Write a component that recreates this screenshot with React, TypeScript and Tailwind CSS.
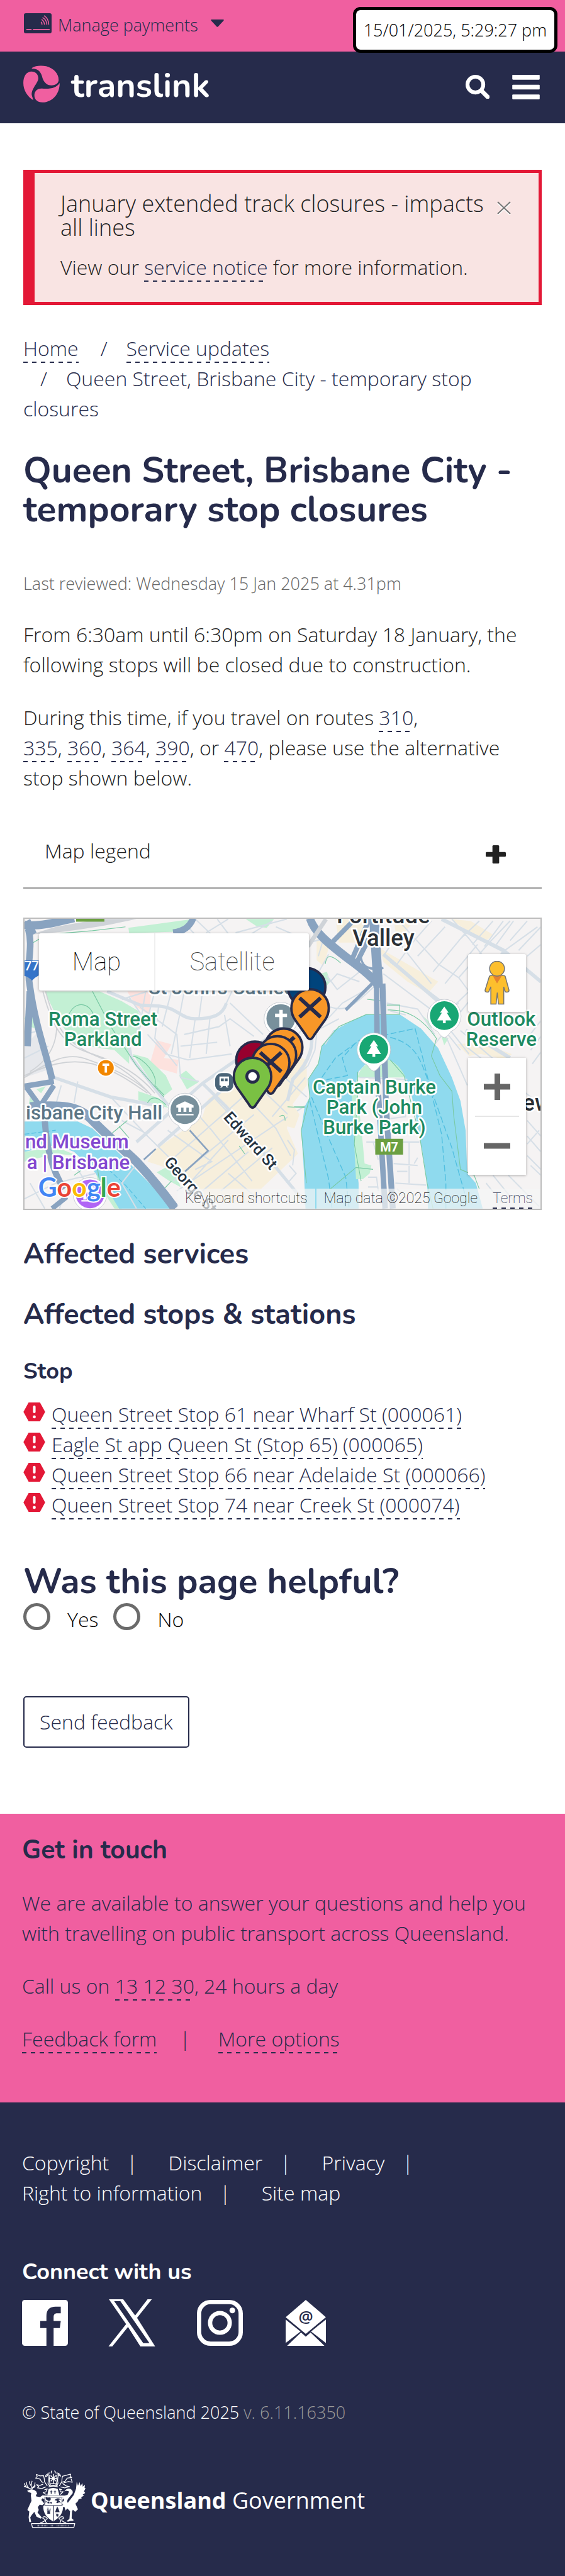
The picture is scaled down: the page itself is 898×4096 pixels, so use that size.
import type { ReactNode } from "react";

const HEADING = "font-['Nunito','Open_Sans',sans-serif] font-bold";

function Link({ children, href = "#" }: { children: ReactNode; href?: string }) {
  return (
    <a
      href={href}
      className="bg-[linear-gradient(90deg,#262b4b_50%,transparent_50%)] bg-[length:14px_2px] bg-[position:0_100%] bg-repeat-x pb-0.5 text-[#262b4b]"
    >
      {children}
    </a>
  );
}

function CardIcon() {
  return (
    <svg viewBox="0 0 58 42" className="h-8 w-11" aria-hidden="true">
      <rect width="58" height="42" rx="4" fill="#262b4b" />
      <path d="M6 34h9M20 34h33" stroke="#f05fa0" strokeWidth="2.6" strokeLinecap="round" />
      <g fill="none" stroke="#f05fa0" strokeWidth="2">
        <path d="M36 18q2 3 2 6" />
        <path d="M37 13q6 4 6 11" />
        <path d="M39 9q9 5 9 15" />
        <path d="M42 5q10 6 10 19" />
      </g>
    </svg>
  );
}

function TranslinkMark() {
  return (
    <svg viewBox="48 137 77 78" className="h-15 w-[58px]" aria-hidden="true">
      <g transform="scale(.752 .3333)" fill="#f05fa0">
        <path d="M88 424C98 410 114 407 128 414C150 427 163 462 163 500C163 520 155 535 143 535C130 535 122 515 118 490C114 452 106 428 88 430Z" />
        <path d="M92 629C75 605 64 565 64 520C64 478 72 447 87 447C98 447 106 465 106 490C106 520 84 560 88 600Z" />
        <path d="M166 520C166 590 146 641 118 643C103 642 95 625 95 598C95 573 103 554 116 555C140 560 157 550 166 520Z" />
      </g>
    </svg>
  );
}

function Pin({ x, y, fill, cross }: { x: number; y: number; fill: string; cross?: boolean }) {
  return (
    <g transform={`translate(${x} ${y})`} stroke="#262b4b">
      <path
        d="M0 66C-4 66 -6 62 -9 57L-31 26C-37 18 -39 10 -39 1A39 39 0 0 1 39 1C39 10 37 18 31 26L9 57C6 62 4 66 0 66Z"
        fill={fill}
        strokeWidth="5"
      />
      {cross && <path d="M-22 -20L22 20M22 -20L-22 20" strokeWidth="8" />}
    </g>
  );
}

function PlacePin({ x, y, fill, children }: { x: number; y: number; fill: string; children: ReactNode }) {
  return (
    <g transform={`translate(${x} ${y})`}>
      <path d="M0 46Q-7 44 -14 33A35 35 0 1 1 14 33Q7 44 0 46Z" fill="#fff" stroke="#b9bfc6" strokeWidth="1" />
      <circle r="30" fill={fill} />
      <g fill="#fff">{children}</g>
    </g>
  );
}

const LEFT_ROADS =
  "M480 420L660 490L760 495C860 500 880 560 960 560C1060 560 1110 540 1130 480L1160 420M600 450L660 530L640 640L600 700L612 760L810 1000L900 1080M560 460L700 420M660 500L860 640L880 860L980 880M690 420L640 700M740 420L700 560M830 420L780 600M900 420L880 520M1000 420L980 560M760 500L740 660L860 800M880 520L830 740M900 640L1090 600L1150 560L1280 650M880 700L1080 680M960 560L930 760M1040 560L1020 740M1120 540L1150 700M1150 480L1330 640M700 640L800 740L920 770L1160 740M190 860L500 960L790 1010M230 900L200 1000M320 880L300 990M640 1190L1000 890L1568 520M560 1080L680 1140M500 960L700 1160L830 1280M760 1210L1100 930M820 1290L1220 960M660 1280L560 1400L640 1530M840 1390L1280 1050M860 1440L1400 1100L1568 1000M1000 890L1130 1010L1470 1400L1568 1510M900 970L1050 1130L1270 1390M1060 960L1200 1100M1240 960L1400 1120L1480 1260M810 1130L1050 1290L960 1330M920 1410L1140 1180M1000 1440L1250 1240M1100 1440L1380 1220M1300 900L1500 1080M1400 820L1568 960M1140 1350L1300 1480M1380 1060L1560 860M60 1400L140 1530M30 1480L200 1400L420 1350M300 1300L400 1450M250 1450L220 1530M430 1520L350 1400M920 90L1130 300M960 50L1240 300M1020 120L1140 50M1080 50L1240 250M1120 210L1380 60M1180 120L1460 50M1400 90L1500 130M30 760L160 700M30 640L110 620M220 560L430 540";

const RIGHT_ROADS =
  "M640 50L880 280L1000 350L1060 420M900 50L1260 210L1480 370M960 50L1060 150L1180 280M700 200L840 60M760 240L920 90M850 320L1040 120M920 380L1110 180M600 270L900 470M560 330L880 540M620 160L560 240M660 180L840 380M740 160L640 280M1000 350L1190 160L1300 60M1120 60L1000 160M1200 60L1080 180M1260 60L1150 190M1320 60L1220 180M1400 60L1300 160M1460 90L1270 210L1060 470L860 690M1350 210L1480 90M1400 240L1480 180M1060 420L860 590M880 540L1060 740M900 600L1010 720M860 560L1000 480M920 640L1000 800L1050 900M1010 620L1380 900M1040 700L1480 1000M1400 660L1480 570M1420 720L1480 650M1430 790L1480 730M1400 1080L1480 1160M1400 1160L1480 1240M1400 1200L1470 1130M1400 1260L1480 1330M1160 1400L1250 1500M1200 1360L1330 1500M1290 1360L1470 1520M1420 1310L1480 1360M240 230L170 340L250 370L290 330L420 370M230 340L290 410L420 320M30 520L170 640L160 720L120 800L30 870L0 980M150 640L320 480L480 400M250 500C350 530 400 480 500 400M170 620L300 560M220 690L270 620M580 480L760 510L860 640M600 520L690 540M180 240L210 150L130 170M0 700L120 580M420 860L700 870M600 1070L690 1060L690 1030M460 1190L770 1190M500 1190L530 1280M710 1190L710 1400M470 1370L520 1370L530 1440M470 1420L530 1420M620 1300L760 1310M630 1400L810 1410M640 1430L720 1500M470 1500L560 1500M640 1340L700 1340M740 1300L760 1270M0 1180L40 1230L30 1310M0 1400L50 1350L10 1310";

function CityMap() {
  return (
    <svg
      viewBox="3 3 1077 605"
      preserveAspectRatio="xMidYMid slice"
      className="absolute inset-0 h-full w-full"
      aria-label="Map of stops near Queen Street, Brisbane City"
    >
      <rect width="1083" height="611" fill="#f5f3f3" />
      {/* western half */}
      <g transform="translate(-8 -17) scale(.3827 .4082)">
        <g fill="#f7efdc">
          <path d="M1030 970L1240 820L1480 740L1568 770V900L1480 1010L1460 1120L1520 1250L1420 1340L1240 1500H1060L830 1330L700 1290L740 1230L880 1140L1000 1060Z" />
        </g>
        <path d="M590 420H720L710 540L640 500ZM750 670L830 690L790 760L870 770L860 840L710 800Z" fill="#fde2de" />
        <g fill="#c3f0d4">
          <path d="M140 420H440L560 470L650 520L665 600L600 700L600 790L520 720L440 710L300 690L200 540Z" />
          <path d="M620 740L700 760L800 850L835 920L790 955L720 880Z" />
          <path d="M873 850L910 825L977 885L915 920Z" />
          <path d="M650 930L760 965L815 1015L700 990L650 975Z" />
          <path d="M596 95L950 50L850 115L600 122Z" />
          <path d="M1235 50H1390L1350 95L1300 90Z" />
          <path d="M750 1345L840 1300L880 1420L820 1390Z" />
          <path d="M30 560L75 450L120 620L60 600ZM60 960L85 990L50 1010ZM95 920L145 905L120 940Z" />
          <path d="M410 1290L500 1400L560 1530H520L430 1400ZM30 1240L200 1215L320 1260L200 1250L30 1290Z" />
        </g>
        <path d="M30 700L90 640L130 650L160 820L30 860Z" fill="#e6e8ec" />
        <path d="M60 130C200 120 380 105 640 50H440L200 90Z" fill="#cfd3d8" />
        <path
          d="M30 1085H320L400 1120L560 1260L850 1530H545L480 1430L400 1330L300 1240L200 1205L30 1240Z"
          fill="#8fdaee"
        />
        <path
          d="M30 1150L200 1130M430 1280L580 1410L690 1530"
          fill="none"
          stroke="#52bfe0"
          strokeWidth="4"
          strokeDasharray="26 12"
        />
        <path d={LEFT_ROADS} fill="none" stroke="#d6dfe7" strokeWidth="7" />
        <path
          d="M480 420L660 490L760 495C860 500 880 560 960 560C1060 560 1110 540 1130 480M190 860L500 960L790 1010M640 1190L1000 890L1568 520M1000 890L1130 1010L1470 1400L1568 1510M600 700L612 760L810 1000M760 1210L1100 930"
          fill="none"
          stroke="#d6dfe7"
          strokeWidth="17"
        />
        <g fill="none" stroke="#cfd2d6" strokeWidth="6">
          <path d="M130 420C190 640 260 700 400 740C560 790 660 850 740 940" />
          <path d="M145 420C200 620 270 690 420 750C560 800 650 880 720 950" />
          <path d="M30 860C150 790 250 720 380 770C500 810 600 850 700 930" />
          <path d="M30 850C150 800 260 760 400 790C540 830 620 890 700 940" />
          <path d="M200 540C220 660 180 760 60 830" />
        </g>
        <g fill="none" stroke="#79c9a4" strokeWidth="4">
          <path d="M400 420L500 600L640 800L790 960" />
          <path d="M620 750C680 760 760 850 740 900L790 950M700 990C720 950 760 960 800 1000M60 180L150 130L400 110L580 90M270 540C320 440 420 500 410 580" />
          <path d="M500 1150L590 1080M545 1110L600 1170M300 1360L420 1280L440 1400M830 1390L790 1430M1200 1210L1230 1250M1420 1060Q1450 1040 1450 1080M1470 1010H1560" />
        </g>
        <g fill="none" stroke="#89a3c0">
          <path d="M30 80C100 90 190 70 300 45" strokeWidth="42" />
          <path d="M40 60L75 130" strokeWidth="46" />
          <path d="M50 100C80 200 35 280 60 400C90 600 150 740 180 870" strokeWidth="36" />
          <path d="M60 420L45 700" strokeWidth="38" />
          <path d="M30 905L190 880M40 910L110 1000M120 1000L190 900" strokeWidth="28" />
          <path d="M60 1010C230 1000 320 1005 390 1070C460 1140 560 1220 640 1290C720 1370 780 1440 850 1530" strokeWidth="48" />
          <path d="M140 1080C150 1200 170 1320 245 1430" strokeWidth="34" />
          <path d="M950 45C930 90 900 110 840 120" strokeWidth="34" />
          <path d="M680 1280L745 1225M930 1130L1030 1235L905 1340" strokeWidth="9" />
          <path d="M180 1530L260 1470" strokeWidth="26" />
        </g>
      </g>
      {/* eastern half */}
      <g transform="translate(552 -17) scale(.3571 .4082)">
        <path
          d="M280 50H480L400 170L300 170ZM540 200L760 310L880 370L820 430L700 370L560 270ZM620 60L740 60L640 160ZM950 50L1070 60L1200 130L1150 170ZM170 150L240 200L210 290L170 260ZM0 960L70 1050L40 1120L0 1110ZM990 690L1120 680L1310 740L1280 770L1130 740L1060 750Z"
          fill="#f7efdc"
        />
        <path d="M190 330L230 320L250 370L200 420ZM790 545L860 600L830 610ZM900 650L940 660L915 695Z" fill="#c3f0d4" />
        <path
          d="M105 1530L95 1330L80 1130L100 1010L130 960L122 870L180 790L200 700L270 620L380 570L460 538L660 540L780 610L880 710L960 860L1010 980L1040 1130L1050 1350L1100 1400L1140 1530H820L815 1400L790 1250L770 1150L720 930L680 850L600 775L480 770L415 830L380 960L390 1200L415 1400V1530Z"
          fill="#8fdaee"
        />
        <path d="M410 860C420 800 500 765 560 765C620 765 670 820 690 860Z" fill="#c3f0d4" />
        <path d="M375 940L410 860V950L440 1200L450 1300L490 1310L480 1350L440 1380H400Z" fill="#c3f0d4" />
        <g fill="none" stroke="#52bfe0" strokeWidth="5" strokeDasharray="34 14">
          <path d="M130 980L240 1380L260 1530M140 960L240 1170L340 1370L360 1530M200 860L280 760L420 670L745 610L790 760L900 1150L925 1400V1530" />
          <path d="M600 655C760 690 780 780 830 900L960 1220L1050 1500M180 880L350 850L320 760L400 680" />
        </g>
        <path d={RIGHT_ROADS} fill="none" stroke="#d6dfe7" strokeWidth="7" />
        <path
          d="M900 50L1260 210L1480 370M560 230L880 470L860 590M1270 210L1060 470M30 520L150 640M120 600C170 680 130 780 30 870L0 980M1040 620L1300 760"
          fill="none"
          stroke="#d6dfe7"
          strokeWidth="20"
        />
        <g fill="none" stroke="#79c9a4" strokeWidth="4">
          <path d="M110 1400L80 1130L130 960L120 870L180 790L200 700L300 600L460 538H655V490H580M585 515C700 510 790 560 870 660L840 750L890 850L960 930L970 1050L1010 1330L1090 1360L1120 1430M600 770L680 850L770 1150L815 1400L850 1530" />
          <path d="M410 830V940L390 1200L430 1390M250 1430L400 1320L500 1330M220 280Q230 230 260 245Q280 250 310 275M0 1010L100 1015M465 460L560 470" />
        </g>
        <g fill="none" stroke="#89a3c0">
          <path d="M130 45C160 130 280 200 350 250C430 300 500 350 540 400" strokeWidth="46" />
          <path d="M400 45L260 170" strokeWidth="26" />
          <path d="M480 45L380 250M510 90L400 280" strokeWidth="28" />
          <path d="M505 45L530 400" strokeWidth="56" />
          <path d="M495 380L340 515" strokeWidth="18" />
          <path d="M430 250Q440 320 560 300" strokeWidth="12" />
          <path d="M520 380L525 850L570 1530" strokeWidth="32" />
          <path d="M555 380L575 1000L615 1530" strokeWidth="34" />
        </g>
        <path d="M225 50L120 190" stroke="#cfd3d8" strokeWidth="24" />
      </g>

      <path d="M111 3h59v6h-59z" fill="#6b9f41" />
      <path d="M3 90H33V121Q25 125 19 132Q12 124 3 122Z" fill="#3574c9" />
      <g
        fontFamily="Roboto, sans-serif"
        fontSize="41"
        fontWeight="500"
        stroke="#fff"
        strokeWidth="7"
        strokeLinejoin="round"
        style={{ paintOrder: "stroke" }}
      >
        <text x="3" y="110" fontSize="27" fill="#fff" stroke="none">77</text>
        <g fill="#5b7686">
          <text x="262" y="160">St John's Cathedral</text>
          <text x="291" y="422" textAnchor="end">isbane City Hall</text>
        </g>
        <g fill="#1e8a61" textAnchor="middle">
          <text x="167" y="226">Roma Street</text>
          <text x="167" y="268">Parkland</text>
          <text x="733" y="368">Captain Burke</text>
          <text x="733" y="410">Park (John</text>
          <text x="733" y="452">Burke Park)</text>
          <text x="998" y="226">Outlook</text>
          <text x="998" y="268">Reserve</text>
        </g>
        <g fill="#8348d0" textAnchor="end">
          <text x="221" y="482">nd Museum</text>
          <text x="223" y="525">a | Brisbane</text>
        </g>
        <g fill="#263442" fontSize="33" fontWeight="500">
          <text transform="translate(417 418) rotate(48)">Edward St</text>
          <text transform="translate(293 512) rotate(48)">George St</text>
        </g>
        <g fill="#2b3036" fontSize="48">
          <text x="752" y="12" textAnchor="middle">Fortitude</text>
          <text x="752" y="60" textAnchor="middle">Valley</text>
          <text x="1042" y="403">ew</text>
        </g>
      </g>
      <rect x="735" y="462" width="58" height="33" fill="#6b9f41" />
      <text x="764" y="488" fontFamily="Roboto, sans-serif" fontSize="26" fontWeight="700" fill="#fff" textAnchor="middle">
        M7
      </text>

      <PlacePin x={538} y={211} fill="#78909c">
        <path d="M-3 -18H4V-10H13V-3H4V18H-3V-3H-12V-10H-3Z" />
      </PlacePin>
      <PlacePin x={338} y={401} fill="#78909c">
        <path d="M-18 -9L0 -17L18 -9V-4H14V5H8V-4H3V5H-3V-4H-8V5H-14V-4H-18ZM-18 9H18V12H-18Z" />
      </PlacePin>
      <PlacePin x={732} y={275} fill="#18a774">
        <path d="M0 -19L9 -6H5L15 10H3V16H-3V10H-15L-5 -6H-9Z" />
      </PlacePin>
      <PlacePin x={879} y={205} fill="#18a774">
        <path d="M0 -19L9 -6H5L15 10H3V16H-3V10H-15L-5 -6H-9Z" />
      </PlacePin>
      <PlacePin x={140} y={577} fill="#b065f5">
        <path d="M-18 -8L0 -18L18 -8V-3H-18ZM-14 0H-8V12H-14ZM-3 0H3V12H-3ZM8 0H14V12H8ZM-18 13H18V16H-18Z" />
      </PlacePin>
      <g transform="translate(173 314)">
        <circle r="19" fill="#fff" />
        <circle r="16.5" fill="#f28700" />
        <path d="M-7 -9H7V-4H2.5V10H-2.5V-4H-7Z" fill="#fff" />
      </g>
      <g transform="translate(420 344)">
        <rect x="-22" y="-22" width="44" height="44" rx="17" fill="#fff" />
        <rect x="-19" y="-19" width="38" height="38" rx="14" fill="#4a6478" />
        <path d="M-10 -12H10V6L6 8L9 11H5L3 8H-3L-5 11H-9L-6 8L-10 6ZM-7 -8V-2H-1V-8ZM1 -8V-2H7V-8Z" fill="#fff" fillRule="evenodd" />
      </g>

      <Pin x={592} y={144} fill="#00447c" />
      <Pin x={599} y={188} fill="#f89728" cross />
      <Pin x={484} y={297} fill="#97002e" />
      <Pin x={544} y={270} fill="#f89728" cross />
      <Pin x={531} y={286} fill="#f89728" />
      <Pin x={517} y={302} fill="#f89728" cross />
      <Pin x={479} y={331} fill="#7ac143" />
      <circle cx="479" cy="332" r="12" fill="#fff" stroke="#262b4b" strokeWidth="6" />

      <g fontFamily="Lato, sans-serif" fontSize="54" fontWeight="700" stroke="#fff" strokeWidth="5" style={{ paintOrder: "stroke" }}>
        <text x="32" y="583" fill="#4285f4">
          G<tspan fill="#ea4335">o</tspan>
          <tspan fill="#fbbc05">o</tspan>
          <tspan fill="#4285f4">g</tspan>
          <tspan fill="#34a853">l</tspan>
          <tspan fill="#ea4335">e</tspan>
        </text>
      </g>
    </svg>
  );
}

function MapPanel() {
  return (
    <section className="relative mt-[46px] h-[465px] overflow-hidden border-2 border-[#bdbdbd] font-['Roboto',sans-serif]">
      <CityMap />
      <div className="absolute left-[23px] top-[23px] flex h-[91px] rounded-[3px] bg-white text-[40px] font-thin shadow-[0_1px_4px_rgba(0,0,0,0.3)]">
        <button className="w-[185px] border-r-2 border-[#efefef] text-black">Map</button>
        <button className="w-61 text-[#444]">Satellite</button>
      </div>
      <button
        aria-label="Street View"
        className="absolute right-[23px] top-14 flex h-[92px] w-[92px] items-center justify-center rounded-[3px] bg-white shadow-[0_1px_4px_rgba(0,0,0,0.3)]"
      >
        <svg viewBox="0 0 52 92" className="h-[70px] w-10" fill="#fdbf2d" stroke="#757575" strokeWidth="2">
          <path d="M10 32Q12 30 16 30H37Q41 30 43 32L51 61Q51 65 47 65Q43 66 42 61L40 54V90H29L26.500 66L24 90H13V54L10 61Q9 66 5 65Q1 65 1 61Z" />
          <path d="M17 31H36L26 47Z" fill="#e5822f" stroke="none" />
          <circle cx="26" cy="16" r="15.500" />
        </svg>
      </button>
      <div className="absolute right-[23px] top-[221px] flex h-[186px] w-[92px] flex-col bg-white px-[11px] shadow-[0_1px_4px_rgba(0,0,0,0.3)]">
        <button aria-label="Zoom in" className="flex flex-1 items-center justify-center border-b-2 border-[#e6e6e6]">
          <svg viewBox="0 0 42 42" className="size-[42px]" fill="#666">
            <path d="M17 0h9v16.500h16v9H26V42h-9V25.500H0v-9h17z" />
          </svg>
        </button>
        <button aria-label="Zoom out" className="flex flex-1 items-center justify-center">
          <svg viewBox="0 0 42 42" className="size-[42px]" fill="#666">
            <path d="M0 16.500h42v9H0z" />
          </svg>
        </button>
      </div>
      <div className="absolute bottom-0 right-0 flex h-8 gap-0.5 text-[23px] font-thin leading-8 text-black">
        <button className="bg-[#f5f5f5]/70 px-3">Keyboard shortcuts</button>
        <div className="flex gap-6 bg-[#f5f5f5]/70 px-3">
          <span>Map data ©2025 Google</span>
          <Link>Terms</Link>
        </div>
      </div>
    </section>
  );
}

function StopIcon() {
  return (
    <svg viewBox="0 0 46 40" className="h-[30px] w-[35px]" aria-hidden="true">
      <path d="M11 0H35L46 20L35 40H11L0 20Z" fill="#e31836" />
      <path d="M23 9V20" stroke="#fff" strokeWidth="5.500" strokeLinecap="round" />
      <circle cx="23" cy="30.500" r="3.200" fill="#fff" />
    </svg>
  );
}

const STOPS = [
  "Queen Street Stop 61 near Wharf St (000061)",
  "Eagle St app Queen St (Stop 65) (000065)",
  "Queen Street Stop 66 near Adelaide St (000066)",
  "Queen Street Stop 74 near Creek St (000074)",
];

function CoatOfArms() {
  return (
    <svg viewBox="54 76 394 368" className="h-[93px] w-[99px]" aria-hidden="true">
      <g fill="#fff">
        {/* deer */}
        <path d="M78 208L98 200L122 202L136 212L142 228L134 234L136 244L160 248L180 234L184 246L168 266L186 288L174 300L158 296L146 312L152 330L144 346L172 378L164 384L138 372L124 342L108 360L98 376L104 406L92 406L88 376L92 340L80 330L92 302L106 272L102 240L104 222L86 216Z" />
        {/* brolga */}
        <path d="M314 212Q330 190 352 196Q372 208 366 224L338 258Q326 278 336 284L374 234L388 194L392 152L400 176L410 154L416 178L428 160L430 182L444 170L442 190L448 192L438 212L446 222L430 232L438 240L420 248L424 256L404 262L400 274L384 290L400 326L382 342L368 328L362 340L360 382L374 394L366 398H352L336 404L330 398L346 386L350 338L332 320L322 334L314 310L300 312L306 296L298 284L312 270L308 240L334 234L344 212L326 208Z" />
        {/* shield */}
        <path d="M178 238H310V260L302 264V298L306 306C306 350 284 380 243 402C202 380 180 350 180 306L188 298V262L178 258Z" />
        <path d="M214 196Q243 184 272 196L282 236H206Z" />
      </g>
      <g fill="#262b4b">
        <path d="M186 246H302V254H186ZM194 254H186V300H194ZM300 254H294V300H300Z" opacity=".35" />
        <path d="M196 252Q200 244 208 252L224 250Q232 260 224 270Q214 276 206 268Q194 264 196 252ZM206 278L218 276L220 288L208 288ZM224 280L234 278V290L226 288ZM194 270L202 276L196 286Z" />
        <path d="M252 268Q260 254 274 256Q292 256 290 268Q284 262 276 266Q288 274 292 288L280 280Q272 292 262 284Q272 276 264 270Z" />
        <path d="M188 300H300V304H246V398H241V304H188Z" />
        <path d="M269 308L276 322L284 344H256L262 324Z" />
        <path d="M200 316L208 344L205 310L212 340L214 310L217 340L224 310L220 344L230 316L222 352H208ZM206 348H224V354H206Z" />
        <path d="M258 352L266 358L268 350L272 358L280 354L274 362L282 372L274 368L268 374L266 366L258 368L264 362Z" />
        <path d="M228 206h5v6h5v4h-5v12h-5v-12h-5v-4h5zM252 206h5v6h5v4h-5v12h-5v-12h-5v-4h5z" />
      </g>
      <g fill="none" stroke="#fff" strokeWidth="5" strokeLinejoin="round">
        <path d="M60 160Q66 186 90 192L110 200M74 154Q74 176 88 190M58 180L80 188M92 148Q94 168 104 178L112 200M110 146Q104 160 108 174M128 156Q130 180 110 188L112 200M130 176Q128 186 116 190" />
        <path d="M236 82Q228 84 232 98M208 102Q192 110 196 120L210 110Q216 140 210 160L222 180M250 82Q260 84 256 98M272 96Q288 102 290 116L276 108Q268 140 274 160L262 180" />
        <path d="M224 96Q212 92 208 104L222 112Q214 140 226 172M262 96Q274 92 278 104L264 112Q272 140 260 172" />
        <path d="M136 104L160 114L182 112Q188 130 188 150L206 178M136 104L142 118L132 128L160 134L170 152L182 156M354 102L326 110L302 116Q298 130 298 150L282 178M354 102L350 116L360 124L332 128L318 148L300 154M356 132L364 154L340 150L310 158" />
        <path d="M180 166L160 174L138 170L152 182L144 190L172 194L196 184M302 162L326 178L346 182L316 190L290 184M188 202L206 196L196 216L180 220L200 232M298 202L282 196L292 216L306 214L288 232" />
        <path d="M216 174H272M218 166Q244 158 270 166M214 184Q244 174 274 184" />
        <path d="M202 412Q184 398 206 384Q196 368 180 374Q172 384 186 386Q202 400 160 412M284 412Q300 398 280 384Q292 368 306 374Q314 384 300 386Q288 400 326 412" />
        <path d="M106 416H380L374 440H112Z" />
        <path d="M228 112L260 148M260 112L228 148M244 102V164M222 130H268" strokeWidth="6" />
      </g>
      <path
        d="M146 434V424M152 424V434M160 424V434M170 424V434M176 424V434M186 424V434M194 424V434M204 424V434M230 424V434M240 424V434M268 424V434M276 424V434M286 424V434M294 424V434M304 424V434M312 424V434M320 424V434M330 424V434M340 424V434"
        stroke="#fff"
        strokeWidth="3"
        opacity=".8"
      />
    </svg>
  );
}

function SocialIcons() {
  return (
    <div className="mt-5 flex h-[73px] items-center">
      <a href="#" aria-label="Facebook" className="mr-16">
        <svg viewBox="0 0 96 96" className="size-[73px]">
          <rect width="96" height="96" rx="6" fill="#fff" />
          <path d="M51 96V59H38V44H51V34C51 20 58 14 70 14H81V28H74C69 28 66 30 66 36V44H81L79 59H66V96Z" fill="#262b4b" />
        </svg>
      </a>
      <a href="#" aria-label="X" className="mr-[66px]">
        <svg viewBox="0 0 98 99" className="size-[75px]" fill="#fff">
          <path
            fillRule="evenodd"
            d="M1 0H31L56 34L82 0H91L60 39L98 99H67L41 58L8 99H0L37 52ZM12 4L73 92H86L25 4Z"
          />
        </svg>
      </a>
      <a href="#" aria-label="Instagram" className="mr-[68px]">
        <svg viewBox="0 0 96 96" className="size-[73px]" fill="none" stroke="#fff">
          <rect x="4.500" y="4.500" width="87" height="87" rx="24" strokeWidth="9" />
          <circle cx="48" cy="48" r="20.500" strokeWidth="9" />
          <circle cx="74" cy="22" r="6" fill="#fff" stroke="none" />
        </svg>
      </a>
      <a href="#" aria-label="Email newsletter">
        <svg viewBox="0 0 84 96" className="h-[73px] w-16" fill="#fff">
          <path d="M42 0L84 36L42 71L0 36Z" />
          <path d="M0 41V90L31 66ZM84 41V90L53 66ZM3 96L32 68L42 77L52 68L81 96Z" />
          <text x="42" y="47" fontFamily="Open Sans, sans-serif" fontWeight="600" fontSize="34" fill="#262b4b" textAnchor="middle">
            @
          </text>
        </svg>
      </a>
    </div>
  );
}

export default function App() {
  return (
    <div className="flex min-h-screen flex-col bg-white font-['Open_Sans',sans-serif] text-[32px] font-light leading-[48px] text-[#212121]">
      <div className="relative flex h-[82px] items-center bg-[#f05fa0] px-[38px] pb-2 text-[27px] text-[#262b4b]">
        <button className="flex items-center gap-[10px]">
          <CardIcon />
          <span className="pt-1.5">Manage payments</span>
          <svg viewBox="0 0 28 16" className="ml-[10px] h-3 w-[21px]" fill="#262b4b" aria-hidden="true">
            <path d="M2 0H26Q29 0 27 2.500L15.500 15Q14 16.500 12.500 15L1 2.500Q-1 0 2 0Z" />
          </svg>
        </button>
        <div className="absolute right-3 top-[11px] z-10 flex h-[73px] items-center rounded-xl border-[5px] border-black bg-white px-3 text-black">
          15/01/2025, 5:29:27 pm
        </div>
      </div>

      <header className="flex h-[114px] items-center justify-between bg-[#262b4b] pb-[10px] pl-[37px] pr-10">
        <a href="#" className="flex items-center gap-[18px] text-white">
          <TranslinkMark />
          <span className={`${HEADING} pt-1 text-[54px] leading-[60px]`}>translink</span>
        </a>
        <div className="flex items-center gap-9 pt-2">
          <button aria-label="Search">
            <svg viewBox="0 0 50 50" className="h-[38px] w-[38px]" fill="none" stroke="#fff">
              <circle cx="20.500" cy="20.500" r="16.500" strokeWidth="8" />
              <path d="M33 33L46 46" strokeWidth="9" strokeLinecap="round" />
            </svg>
          </button>
          <button aria-label="Menu">
            <svg viewBox="0 0 57 51" className="h-[39px] w-[44px]" fill="#fff">
              <rect width="57" height="10" rx="1.500" />
              <rect y="20.500" width="57" height="10" rx="1.500" />
              <rect y="41" width="57" height="10" rx="1.500" />
            </svg>
          </button>
        </div>
      </header>

      <main className="px-[37px]">
        <div role="alert" className="mt-[74px] flex border-[5px] border-l-[18px] border-[#e31836] bg-[#f9e4e3] pb-[31px] pl-[41px] pr-11 pt-[30px]">
          <div className="flex-1">
            <h2 className="text-[36px] leading-[38px]">January extended track closures - impacts all lines</h2>
            <p className="mt-5">
              View our <Link>service notice</Link> for more information.
            </p>
          </div>
          <button aria-label="Close" className="mt-[15px] h-[22px]">
            <svg viewBox="0 0 22 22" className="size-[22px]" fill="none" strokeWidth="2">
              <path d="M1 3L21 22M21 3L1 22" stroke="#fff" />
              <path d="M1 1L21 20M21 1L1 20" stroke="#777" />
            </svg>
          </button>
        </div>

        <nav aria-label="Breadcrumb" className="mt-[45px] text-[#262b4b]">
          <ol className="flex flex-wrap gap-x-2">
            <li>
              <Link>Home</Link>
            </li>
            <li>
              <span className="pl-[27px] pr-[30px]">/</span>
              <Link>Service updates</Link>
            </li>
            <li>
              <span className="pl-[27px] pr-[30px]">/</span>
              Queen Street, Brisbane City - temporary stop closures
            </li>
          </ol>
        </nav>

        <h1 className={`${HEADING} mt-[43px] text-[57px] leading-[62px] text-[#262b4b]`}>
          Queen Street, Brisbane City - temporary stop closures
        </h1>
        <p className="mt-[66px] text-[27px] leading-[42px] text-[#666]">Last reviewed: Wednesday 15 Jan 2025 at 4.31pm</p>
        <p className="mt-9">
          From 6:30am until 6:30pm on Saturday 18 January, the following stops will be closed due to construction.
        </p>
        <p className="mt-9">
          During this time, if you travel on routes <Link>310</Link>,{" "}
          <span className="whitespace-nowrap">
            <Link>335</Link>, <Link>360</Link>, <Link>364</Link>, <Link>390</Link>, or <Link>470</Link>,
          </span>{" "}
          please use the alternative stop shown below.
        </p>

        <button className="mt-[68px] flex w-full items-center justify-between border-b-2 border-[#999] pb-[34px] pl-[34px] pr-[57px] text-left">
          <span>Map legend</span>
          <svg viewBox="0 0 42 38" className="mt-[11px] h-[29px] w-8" fill="#212121" aria-hidden="true">
            <rect x="14" width="14" height="38" rx="2" />
            <rect y="14" width="42" height="10" rx="2" />
          </svg>
        </button>

        <MapPanel />

        <h2 className={`${HEADING} mt-[47px] text-[45px] text-[#262b4b]`}>Affected services</h2>
        <h2 className={`${HEADING} mt-12 text-[45px] text-[#262b4b]`}>Affected stops &amp; stations</h2>
        <h3 className={`${HEADING} mt-[42px] text-[36px] text-[#262b4b]`}>Stop</h3>
        <ul className="mt-5">
          {STOPS.map((stop) => (
            <li key={stop} className="flex items-start gap-[10px]">
              <span className="mt-[5px]">
                <StopIcon />
              </span>
              <span>
                <Link>{stop}</Link>
              </span>
            </li>
          ))}
        </ul>

        <fieldset className="mt-[67px]">
          <legend className={`${HEADING} text-[56px] leading-[62px] text-[#262b4b]`}>Was this page helpful?</legend>
          <div className="mt-[3px] flex h-[48px] items-start">
            <input id="helpful-yes" type="radio" name="helpful" className="size-[43px] appearance-none rounded-full border-[5px] border-[#6b6b6b]" />
            <label htmlFor="helpful-yes" className="ml-[27px] mr-6 pt-0.5 text-black">Yes</label>
            <input id="helpful-no" type="radio" name="helpful" className="size-[43px] appearance-none rounded-full border-[5px] border-[#6b6b6b]" />
            <label htmlFor="helpful-no" className="ml-[27px] pt-0.5 text-black">No</label>
          </div>
        </fieldset>
        <button className="mt-[100px] h-[82px] rounded-[5px] border-2 border-[#262b4b] px-6 text-[#262b4b]">Send feedback</button>
      </main>

      <section className="mt-[105px] bg-[#f05fa0] px-[35px] pb-[77px] pt-[34px] text-[#262b4b]">
        <h2 className={`${HEADING} text-[41px]`}>Get in touch</h2>
        <p className="mt-9">
          We are available to answer your questions and help you with travelling on public transport across Queensland.
        </p>
        <p className="mt-9">
          Call us on <Link>13 12 30</Link>, 24 hours a day
        </p>
        <p className="mt-9 flex">
          <span>
            <Link>Feedback form</Link>
          </span>
          <span className="pl-9 pr-[44px]">|</span>
          <span>
            <Link>More options</Link>
          </span>
        </p>
      </section>

      <footer className="grow bg-[#262b4b] px-[35px] pb-[70px] pt-[72px] text-white">
        <ul className="flex flex-wrap">
          {["Copyright", "Disclaimer", "Privacy", "Right to information"].map((item) => (
            <li key={item} className="pr-[49px]">
              <a href="#">{item}</a>
              <span className="pl-7">|</span>
            </li>
          ))}
          <li>
            <a href="#">Site map</a>
          </li>
        </ul>
        <h2 className={`${HEADING} mt-[78px] text-[36px]`}>Connect with us</h2>
        <SocialIcons />
        <p className="mt-[85px] text-[27px] leading-[42px]">
          © State of Queensland 2025 <span className="text-[#999]">v. 6.11.16350</span>
        </p>
        <a href="#" className="mt-[70px] flex items-center gap-2 pl-0.5" aria-label="Queensland Government">
          <CoatOfArms />
          <span className="pt-1 text-[36px] font-normal">
            <b className="font-bold">Queensland</b> Government
          </span>
        </a>
      </footer>
    </div>
  );
}
